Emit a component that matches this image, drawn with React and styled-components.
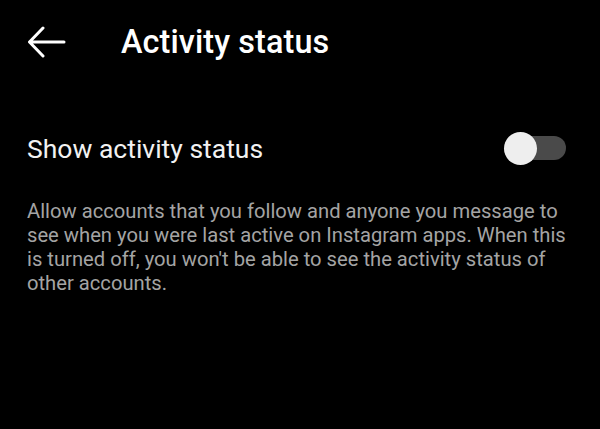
import React, { useState } from "react";
import styled, { createGlobalStyle } from "styled-components";

const Global = createGlobalStyle`
  html, body { margin: 0; padding: 0; background: #000; }
  body { font-family: Roboto, "Noto Sans", sans-serif; -webkit-font-smoothing: antialiased; }
`;

const Screen = styled.div`
  width: 600px;
  height: 429px;
  background: #000;
  color: #fff;
  overflow: hidden;
`;

const Header = styled.header`
  display: flex;
  align-items: center;
  height: 84px;
  padding: 0 0 0 27px;
  gap: 55px;
`;

const BackButton = styled.button`
  display: flex;
  align-items: center;
  justify-content: center;
  width: 39px;
  height: 34px;
  padding: 0;
  border: 0;
  background: transparent;
  color: #fff;
`;

const Title = styled.h1`
  margin: 0;
  font-size: 32.4px;
  font-weight: 500;
  letter-spacing: 0.1px;
`;

const Content = styled.main`
  padding: 42px 34px 0 27px;
`;

const Row = styled.div`
  display: flex;
  align-items: center;
  justify-content: space-between;
  height: 44px;
`;

const Label = styled.span`
  font-size: 26.5px;
  font-weight: 400;
  color: #f2f2f2;
`;

const Track = styled.button`
  position: relative;
  width: 62px;
  height: 24px;
  margin-right: 0;
  padding: 0;
  border: 0;
  border-radius: 12px;
  background: ${(p) => (p.$on ? "#3797f0" : "#4a4a4a")};
`;

const Knob = styled.span`
  position: absolute;
  top: 50%;
  left: ${(p) => (p.$on ? "29px" : "0px")};
  width: 33px;
  height: 33px;
  margin-top: -16.5px;
  border-radius: 50%;
  background: #eeeeee;
`;

const Description = styled.p`
  width: 542px;
  margin: 29px 0 0;
  font-size: 20.2px;
  line-height: 24px;
  color: #a4a4a4;
`;

export default function App() {
  const [on, setOn] = useState(false);
  return (
    <Screen>
      <Global />
      <Header>
        <BackButton aria-label="Back">
          <svg width="39" height="32" viewBox="0 0 39 32" fill="none">
            <path
              d="M37 16H3M16 2L2.5 16L16 30"
              stroke="#fff"
              strokeWidth="3"
              strokeLinecap="round"
              strokeLinejoin="round"
            />
          </svg>
        </BackButton>
        <Title>Activity status</Title>
      </Header>
      <Content>
        <Row>
          <Label>Show activity status</Label>
          <Track $on={on} onClick={() => setOn(!on)} aria-label="Toggle">
            <Knob $on={on} />
          </Track>
        </Row>
        <Description>
          Allow accounts that you follow and anyone you message to see when you
          were last active on Instagram apps. When this is turned off, you won't
          be able to see the activity status of other accounts.
        </Description>
      </Content>
    </Screen>
  );
}
